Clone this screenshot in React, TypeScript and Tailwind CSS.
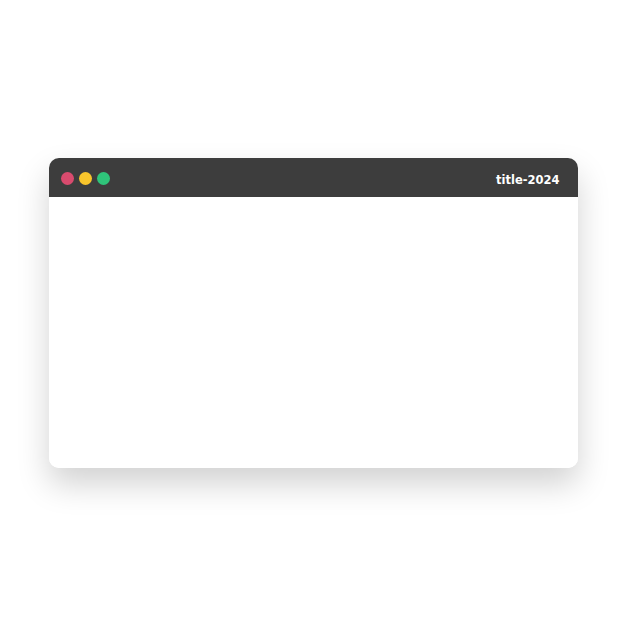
export default function App() {
  return (
    <div className="flex h-[626px] w-[626px] items-start justify-center bg-white pt-[158px]">
      <div className="flex h-[310px] w-[529px] flex-col overflow-hidden rounded-[10px] bg-white shadow-[0_16px_32px_rgba(0,0,0,0.18)]">
        <div className="flex h-[39px] items-center justify-between bg-[#3d3d3d] pl-[12px] pr-[18px] pt-[2px]">
          <div className="flex items-center gap-[5px]">
            <span className="h-[13px] w-[13px] rounded-full bg-[#d94b6e]" />
            <span className="h-[13px] w-[13px] rounded-full bg-[#f8c52c]" />
            <span className="h-[13px] w-[13px] rounded-full bg-[#2fc47a]" />
          </div>
          <span className="pt-[5px] text-[11.5px] font-bold text-white [font-family:'DejaVu_Sans',sans-serif]">
            title-2024
          </span>
        </div>
        <div className="flex-1 bg-white" />
      </div>
    </div>
  );
}
